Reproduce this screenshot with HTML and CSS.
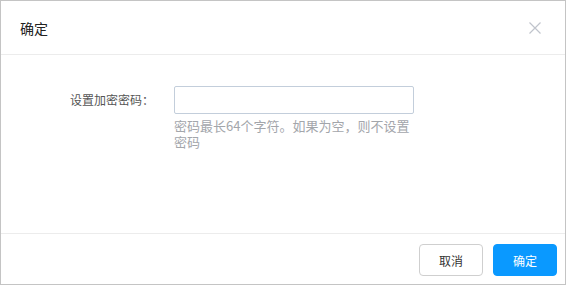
FILE: index.html
```html
<!DOCTYPE html>
<html lang="zh">
<head>
<meta charset="utf-8">
<title>确定</title>
<link rel="stylesheet" href="styles.css">
</head>
<body>
<div class="dialog">
  <div class="dialog-header">
    <span class="dialog-title">确定</span>
    <button class="close-btn" aria-label="关闭">
      <svg width="12" height="12" viewBox="0 0 12 12"><path d="M0.5 0.5 L11.5 11.5 M11.5 0.5 L0.5 11.5" stroke="#c0c4cc" stroke-width="1.2" fill="none"/></svg>
    </button>
  </div>
  <div class="dialog-body">
    <div class="form-row">
      <label class="form-label">设置加密密码：</label>
      <div class="form-control">
        <input class="text-input" type="password">
        <div class="help-text">密码最长64个字符。如果为空，则不设置密码</div>
      </div>
    </div>
  </div>
  <div class="dialog-footer">
    <button class="btn btn-default">取消</button>
    <button class="btn btn-primary">确定</button>
  </div>
</div>
</body>
</html>
```
FILE: styles.css
```css
* { box-sizing: border-box; }
html, body {
  margin: 0;
  padding: 0;
  background: #ffffff;
}
body {
  font-family: "Noto Sans CJK SC", "Liberation Sans", sans-serif;
  font-size: 12px;
  text-spacing-trim: space-all;
}
.dialog {
  width: 566px;
  height: 285px;
  border: 1px solid #c4c4c4;
  display: flex;
  flex-direction: column;
  background: #fff;
}
.dialog-header {
  height: 54px;
  border-bottom: 1px solid #ececec;
  display: flex;
  align-items: center;
  justify-content: space-between;
  padding: 0 24px 0 19px;
}
.dialog-title {
  font-size: 14px;
  color: #222;
  line-height: 20px;
}
.close-btn {
  background: none;
  border: 0;
  padding: 0;
  width: 12px;
  height: 12px;
  display: flex;
  cursor: pointer;
}
.dialog-body {
  flex: 1;
  padding-top: 31px;
}
.form-row {
  display: grid;
  grid-template-columns: 153px 240px;
  column-gap: 20px;
}
.form-label {
  text-align: right;
  color: #555;
  line-height: 28px;
  font-size: 12px;
}
.text-input {
  display: block;
  width: 240px;
  height: 28px;
  border: 1px solid #c3cedb;
  border-radius: 2px;
  outline: none;
  padding: 0 8px;
  font-size: 12px;
}
.help-text {
  color: #a3a6ab;
  font-size: 13px;
  line-height: 16px;
  margin-top: 4px;
}
.dialog-footer {
  border-top: 1px solid #ececec;
  display: flex;
  justify-content: flex-end;
  gap: 10px;
  padding: 10px 8px 8px 0;
}
.btn {
  width: 64px;
  height: 32px;
  border-radius: 4px;
  font-family: "Noto Sans CJK SC", "Liberation Sans", sans-serif;
  font-size: 12px;
  cursor: pointer;
  padding: 0;
}
.btn-default {
  background: #fff;
  border: 1px solid #cfcfcf;
  color: #333;
}
.btn-primary {
  background: #0a99ff;
  border: 1px solid #0a99ff;
  color: #fff;
}
```
